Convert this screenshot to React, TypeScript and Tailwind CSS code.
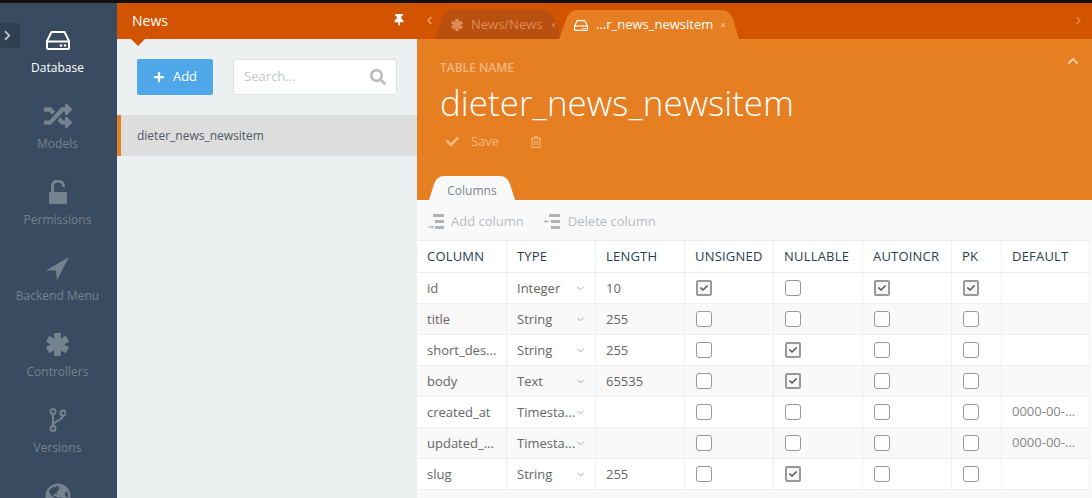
import { FaCheck, FaChevronRight, FaChevronUp, FaGlobeAmericas, FaPlus, FaRandom, FaRegTrashAlt, FaSearch, FaThumbtack } from 'react-icons/fa';
import { FiChevronDown, FiChevronLeft, FiChevronRight } from 'react-icons/fi';

function HddIcon({ className }: { className?: string }) {
  return (
    <svg viewBox="0 0 24 19" className={className} fill="none" stroke="currentColor" strokeWidth="2">
      <path d="M5.5 1H18.5L23 10V17a1 1 0 0 1-1 1H2a1 1 0 0 1-1-1V10Z" strokeLinejoin="round" />
      <path d="M1 10.5H23" />
      <circle cx="15" cy="14.5" r="1.3" fill="currentColor" stroke="none" />
      <circle cx="19" cy="14.5" r="1.3" fill="currentColor" stroke="none" />
    </svg>
  );
}

function LockIcon({ className }: { className?: string }) {
  return (
    <svg viewBox="0 0 18 24" className={className} fill="currentColor">
      <rect x="0" y="12" width="18" height="12" rx="1" />
      <path d="M3.5 12V6a5.5 5 0 0 1 11 0V7" fill="none" stroke="currentColor" strokeWidth="3" />
    </svg>
  );
}

function ArrowIcon({ className }: { className?: string }) {
  return (
    <svg viewBox="0 0 23 23" className={className} fill="currentColor">
      <path d="M23 0L0 13.5H10L11 23Z" />
    </svg>
  );
}

function StarIcon({ className }: { className?: string }) {
  return (
    <svg viewBox="0 0 24 24" className={className} stroke="currentColor" strokeWidth="7">
      <path d="M12 0V24M1.6 6L22.4 18M1.6 18L22.4 6" />
    </svg>
  );
}

function BranchIcon({ className }: { className?: string }) {
  return (
    <svg viewBox="0 0 17 24" className={className} fill="none" stroke="currentColor" strokeWidth="2">
      <circle cx="4" cy="3.5" r="2.5" />
      <circle cx="4" cy="20.5" r="2.5" />
      <circle cx="14" cy="5" r="2.5" />
      <path d="M4 6V18M14 7.5C14 13 4 12 4 18" />
    </svg>
  );
}

const navItems = [
  { label: 'Database', icon: <HddIcon className="h-[19px] w-6" />, active: true },
  { label: 'Models', icon: <FaRandom size={28} /> },
  { label: 'Permissions', icon: <LockIcon className="h-6 w-[18px]" /> },
  { label: 'Backend Menu', icon: <ArrowIcon className="h-[23px] w-[23px]" /> },
  { label: 'Controllers', icon: <StarIcon className="h-[23px] w-[23px]" /> },
  { label: 'Versions', icon: <BranchIcon className="h-6 w-[17px]" /> },
  { label: '', icon: <FaGlobeAmericas size={26} /> },
];

const headers = ['Column', 'Type', 'Length', 'Unsigned', 'Nullable', 'Autoincr', 'PK', 'Default'];

const rows = [
  { name: 'id', type: 'Integer', length: '10', unsigned: true, nullable: false, auto: true, pk: true, def: '' },
  { name: 'title', type: 'String', length: '255', unsigned: false, nullable: false, auto: false, pk: false, def: '' },
  { name: 'short_des...', type: 'String', length: '255', unsigned: false, nullable: true, auto: false, pk: false, def: '' },
  { name: 'body', type: 'Text', length: '65535', unsigned: false, nullable: true, auto: false, pk: false, def: '' },
  { name: 'created_at', type: 'Timesta...', length: '', unsigned: false, nullable: false, auto: false, pk: false, def: '0000-00-...' },
  { name: 'updated_...', type: 'Timesta...', length: '', unsigned: false, nullable: false, auto: false, pk: false, def: '0000-00-...' },
  { name: 'slug', type: 'String', length: '255', unsigned: false, nullable: true, auto: false, pk: false, def: '' },
];

const gridCols = 'grid grid-cols-[89px_89px_89px_89px_89px_89px_50px_88px]';

function Checkbox({ checked }: { checked: boolean }) {
  if (checked) {
    return (
      <span className="flex h-4 w-4 items-center justify-center rounded-[2px] border-2 border-[#999] bg-[#f7f7f7]">
        <FaCheck size={8} className="text-[#555]" />
      </span>
    );
  }
  return <span className="block h-4 w-4 rounded-[3px] border border-[#999] bg-white" />;
}

function TabShape({ fill, path }: { fill: string; path: string }) {
  return (
    <svg className="absolute inset-0 h-full w-full" fill={fill}>
      <path d={path} />
    </svg>
  );
}

function ColumnIcon({ remove }: { remove?: boolean }) {
  return (
    <svg width="16" height="16" viewBox="0 0 16 16" className="text-[#aeb3b7]" fill="currentColor">
      <rect x="5" y="0" width="11" height="3" />
      <rect x="7" y="6" width="9" height="3" />
      <rect x="7" y="12" width="9" height="3" />
      {remove ? (
        <path d="M5.5 7H2.5V5.5L0 7.5L2.5 9.5V8H5.5Z" />
      ) : (
        <path d="M0 12.5H3.5V11L6 13L3.5 15V13.5H0Z" />
      )}
    </svg>
  );
}

export default function App() {
  return (
    <div className="flex h-[498px] w-[1092px] flex-col overflow-hidden bg-[#111] pt-[3px] font-['Open_Sans',sans-serif]">
      <div className="flex min-h-0 flex-1">
        {/* main menu */}
        <aside className="relative h-full w-[117px] shrink-0 overflow-hidden bg-[#394b60]">
          <div className="absolute left-0 top-[20px] flex h-[25px] w-5 items-center rounded-r-[4px] bg-[#2f4053] pl-[2px] text-[#c5ccd3]">
            <FaChevronRight size={11} />
          </div>
          <nav className="flex flex-col pr-[2px] pt-[20px]">
            {navItems.map((item, i) => (
              <div key={i} className={`flex h-[76px] shrink-0 flex-col items-center ${item.active ? 'text-white' : 'text-[#75838f]'}`}>
                <div className="flex h-[34px] items-center justify-center">{item.icon}</div>
                <span className="mt-[2px] whitespace-nowrap text-[12px] leading-[17px]">{item.label}</span>
              </div>
            ))}
          </nav>
        </aside>

        {/* list panel */}
        <section className="flex h-full w-[300px] shrink-0 flex-col bg-[#ecf0f1]">
          <header className="relative flex h-[36px] shrink-0 items-center justify-between bg-[#d35400] pb-[2px] pl-[15px] pr-[12px] text-white">
            <span className="text-[14px]">News</span>
            <FaThumbtack size={12} />
            <span className="absolute left-[14px] top-full h-0 w-0 border-x-[7px] border-t-[7px] border-x-transparent border-t-[#d35400]" />
          </header>
          <div className="flex items-center px-5 pt-5">
            <button className="flex h-9 w-[76px] items-center justify-center gap-2 rounded-[2px] bg-[#4da7e8] text-[13px] text-white">
              <FaPlus size={12} />
              Add
            </button>
            <div className="ml-5 flex h-9 w-[164px] items-center justify-between rounded-[3px] border border-[#dfe3e5] bg-white pl-[10px] pr-[10px]">
              <span className="text-[13px] text-[#c4c7c9]">Search...</span>
              <FaSearch size={16} className="text-[#bbb]" />
            </div>
          </div>
          <div className="mt-5 flex h-[41px] items-center border-l-[4px] border-[#e67e22] bg-[#dddddd] pl-4 text-[12px] text-[#4d5a66]">
            dieter_news_newsitem
          </div>
        </section>

        {/* editor */}
        <main className="flex h-full min-w-0 flex-1 flex-col bg-[#f9f9f9]">
          <div className="relative flex h-[36px] shrink-0 items-end bg-[#d35400] pl-[18px] text-[13px]">
            <FiChevronLeft size={13} className="absolute left-[6px] top-[11px] text-[#f0a878]" />
            <div className="relative flex h-[29px] w-[127px] items-center pl-[16px] pt-[1px] text-[#df8b58]">
              <TabShape fill="#b9500f" path="M0 29L7 10C9 4 13 0 18 0H109C114 0 118 4 120 9L127 29Z" />
              <StarIcon className="relative h-3 w-3" />
              <span className="relative ml-[8px]">News/News</span>
              <span className="relative ml-[8px] text-[10px]">×</span>
            </div>
            <div className="relative -ml-[3px] flex h-[29px] w-[180px] items-center pl-[15px] pt-[1px] text-white">
              <TabShape fill="#e67e22" path="M0 29L7 10C9 4 13 0 18 0H162C168 0 172 4 174 9L180 29Z" />
              <HddIcon className="relative h-[11px] w-[14px]" />
              <span className="relative ml-[8px] whitespace-nowrap">...r_news_newsitem</span>
              <span className="relative ml-[7px] text-[10px] text-[#f6c79e]">×</span>
            </div>
            <FiChevronRight size={13} className="absolute right-[7px] top-[11px] text-[#ee8a4e]" />
          </div>

          <div className="relative h-[161px] shrink-0 bg-[#e67e22] pl-[23px] pt-[21px]">
            <FaChevronUp size={12} className="absolute right-[13px] top-[16px] text-[#f8d0ac]" />
            <div className="text-[12px] font-semibold leading-[16px] text-[#f3b680]">TABLE NAME</div>
            <div className="mt-[4px] whitespace-nowrap text-[35px] font-light leading-[46px] text-white">dieter_news_newsitem</div>
            <div className="mt-[6px] flex items-center pl-[6px] text-[13px] text-[#f3b680]">
              <FaCheck size={13} />
              <span className="ml-[12px]">Save</span>
              <FaRegTrashAlt size={12} className="ml-[31px]" />
            </div>
            <div className="absolute bottom-0 left-[12px] flex h-[24px] w-[86px] items-center justify-center pt-[5px] text-[12px] text-[#7b8790]">
              <svg className="absolute inset-0 h-full w-full" viewBox="0 0 86 24" preserveAspectRatio="none">
                <path d="M0 24L5 8C7 3 10 0 15 0H71C76 0 79 3 81 8L86 24Z" fill="#f9f9f9" />
              </svg>
              <span className="relative">Columns</span>
            </div>
          </div>

          <div className="flex h-[40px] shrink-0 items-center pl-[11px] pt-[3px] text-[13px] text-[#b7bcc0]">
            <ColumnIcon />
            <span className="ml-[7px]">Add column</span>
            <span className="ml-[20px]"><ColumnIcon remove /></span>
            <span className="ml-[8px]">Delete column</span>
          </div>

          <div className="ml-px w-[671px] border-t border-[#e9edee] bg-white">
            <div className={`${gridCols} h-[32px] border-b border-[#e9edee]`}>
              {headers.map((h, i) => (
                <div key={h} className={`flex items-center border-r border-[#ecf0f1] pt-[1px] text-[13px] uppercase tracking-[0.2px] text-[#2b3e50] ${i === 0 ? 'pl-[9px]' : 'pl-[10px]'}`}>
                  {h}
                </div>
              ))}
            </div>
            {rows.map((row, idx) => (
              <div key={row.name} className={`${gridCols} h-[31px] border-b border-[#ecf0f1] text-[13px] text-[#666] ${idx % 2 === 1 ? 'bg-[#f9f9f9]' : 'bg-white'}`}>
                <div className="flex items-center border-r border-[#ecf0f1] pl-[9px] pt-[1px]">{row.name}</div>
                <div className="flex items-center justify-between border-r border-[#ecf0f1] pl-[10px] pr-[9px] pt-[1px]">
                  <span className="whitespace-nowrap">{row.type}</span>
                  <FiChevronDown size={11} className="text-[#95a5a6]" />
                </div>
                <div className="flex items-center border-r border-[#ecf0f1] pl-[10px] pt-[1px]">{row.length}</div>
                <div className="flex items-center border-r border-[#ecf0f1] pl-[11px]"><Checkbox checked={row.unsigned} /></div>
                <div className="flex items-center border-r border-[#ecf0f1] pl-[11px]"><Checkbox checked={row.nullable} /></div>
                <div className="flex items-center border-r border-[#ecf0f1] pl-[11px]"><Checkbox checked={row.auto} /></div>
                <div className="flex items-center border-r border-[#ecf0f1] pl-[11px]"><Checkbox checked={row.pk} /></div>
                <div className="flex items-center border-r border-[#ecf0f1] pl-[10px] text-[#888]">{row.def}</div>
              </div>
            ))}
          </div>
        </main>
      </div>
    </div>
  );
}
